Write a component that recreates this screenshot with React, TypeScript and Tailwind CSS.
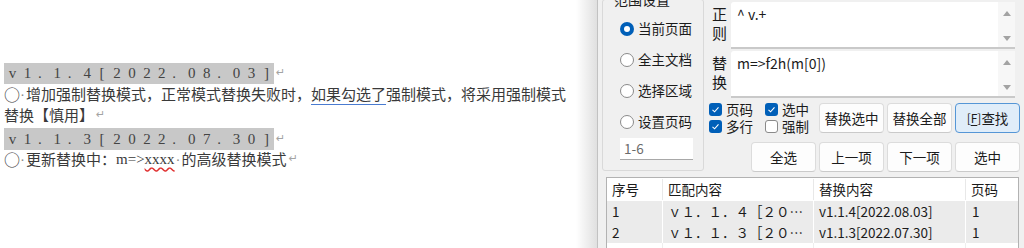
import type { ReactNode } from "react";

const SANS = "font-['Noto_Sans_CJK_SC','Noto_Sans',sans-serif]";

// one full-width cell per character, Times-like glyphs like the Word document
function WideText({ text }: { text: string }) {
  return (
    <>
      {Array.from(text).map((c, i) => (
        <span
          key={i}
          className={`inline-block w-[14.95px] font-['Liberation_Serif',serif] ${c === "." ? "pl-[3px] text-left" : "text-center"}`}
        >
          {c}
        </span>
      ))}
    </>
  );
}

function Mark() {
  return <span className="ml-[2px] font-['DejaVu_Sans',sans-serif] text-[11px] text-[#a3a3a3]">↵</span>;
}

function Dot() {
  return <span className="mx-[1px] font-['Liberation_Sans',sans-serif] text-[#8a8a8a]">·</span>;
}

function Bullet() {
  return <span className="inline-block w-[15px] text-center text-[16px]">○</span>;
}

function Radio({ checked, label }: { checked?: boolean; label: string }) {
  return (
    <div className="flex h-[31px] items-center gap-[4px]">
      {checked ? (
        <span className="flex size-[14px] items-center justify-center rounded-full bg-[#005fb8]">
          <span className="size-[6px] rounded-full bg-white" />
        </span>
      ) : (
        <span className="size-[14px] rounded-full border border-[#8a8a8a] bg-white" />
      )}
      <span>{label}</span>
    </div>
  );
}

function Check({ checked, label }: { checked?: boolean; label: string }) {
  return (
    <div className="flex h-[17px] items-center gap-[4px] leading-[17px]">
      {checked ? (
        <span className="flex size-[13px] items-center justify-center rounded-[3px] bg-[#005fb8]">
          <svg width="9" height="9" viewBox="0 0 9 9" fill="none">
            <path d="M1.5 4.8 L3.6 6.8 L7.5 2.4" stroke="white" strokeWidth="1.1" />
          </svg>
        </span>
      ) : (
        <span className="size-[13px] rounded-[3px] border border-[#8a8a8a] bg-white" />
      )}
      <span>{label}</span>
    </div>
  );
}

function Btn({ children, active }: { children: ReactNode; active?: boolean }) {
  return (
    <button
      className={
        active
          ? "flex h-[30px] w-[65px] items-center justify-center rounded-[4px] border border-[#5596d6] bg-[#e0edf9]"
          : "flex h-[30px] w-[65px] items-center justify-center rounded-[4px] border border-[#dcdcdc] border-b-[#cacaca] bg-[#fdfdfd]"
      }
    >
      {children}
    </button>
  );
}

function TextBox({ value }: { value: string }) {
  return (
    <div className="flex h-[47px] w-[284px] rounded-t-[3px] border-b-2 border-[#c9c9c9] bg-white">
      <div className="flex-1 pl-[6px] pt-[3px] text-[14px] leading-[18px] text-[#1b1b1b]">{value}</div>
      <div className="flex w-[17px] flex-col items-center justify-between bg-[#f7f7f7] pb-[6px] pt-[9px]">
        <svg width="8" height="5" viewBox="0 0 8 5">
          <path d="M4 0 L8 5 L0 5 Z" fill="#a3a3a3" />
        </svg>
        <svg width="8" height="5" viewBox="0 0 8 5">
          <path d="M0 0 L8 0 L4 5 Z" fill="#a3a3a3" />
        </svg>
      </div>
    </div>
  );
}

const ROWS = [
  { no: "1", match: "ｖ１．１．４［２０２２．０８．０３］", repl: "v1.1.4[2022.08.03]", page: "1" },
  { no: "2", match: "ｖ１．１．３［２０２２．０７．３０］", repl: "v1.1.3[2022.07.30]", page: "1" },
];

export default function App() {
  return (
    <div className="flex h-[248px] w-[1024px] overflow-hidden bg-white">
      {/* document */}
      <div className={`w-[576px] shrink-0 pl-[4px] pt-[63px] text-[15px] text-[#3a3a3a] ${SANS}`}>
        <div className="flex h-[21px] items-center whitespace-nowrap">
          <span className="flex h-[21px] items-center bg-[#c8c8c8] pl-[1px] text-[#444]">
            <WideText text="v1.1.4[2022.08.03]" />
          </span>
          <Mark />
        </div>
        <div className="flex h-[20px] items-center whitespace-nowrap">
          <Bullet />
          <Dot />增加强制替换模式，正常模式替换失败时，
          <span className="underline decoration-[#4a7bd0] underline-offset-[4px]">如果勾选了</span>
          强制模式，将采用强制模式
        </div>
        <div className="flex h-[22px] items-center whitespace-nowrap">
          替换【慎用】
          <Mark />
        </div>
        <div className="mt-[2px] flex h-[22px] items-center whitespace-nowrap">
          <span className="flex h-[22px] items-center bg-[#c8c8c8] pl-[1px] text-[#444]">
            <WideText text="v1.1.3[2022.07.30]" />
          </span>
          <Mark />
        </div>
        <div className="flex h-[18px] items-center whitespace-nowrap">
          <Bullet />
          <Dot />更新替换中：
          <span className="font-['Liberation_Serif',serif]">
            m=&gt;
            <span className="underline decoration-[#e03030] decoration-wavy underline-offset-[3px]">xxxx</span>
          </span>
          <Dot />
          的高级替换模式
          <Mark />
        </div>
      </div>
      <div className="w-[21px] shrink-0 bg-gradient-to-r from-white to-[#e0e0e0]" />

      {/* replace panel */}
      <div className={`flex flex-1 flex-col border-l border-[#c2c2c2] bg-[#f0f0f0] pl-[4px] pr-[4px] text-[13.5px] text-[#1b1b1b] ${SANS}`}>
        <div className="flex gap-[4px]">
          <fieldset className="mt-[-10px] h-[181px] w-[102px] shrink-0 rounded-[3px] border border-[#d9d9d9] pl-[17px]">
            <legend className="ml-[-8px] px-[2px] text-[14px] leading-[18px]">范围设置</legend>
            <div className="mt-[5px]">
              <Radio checked label="当前页面" />
              <Radio label="全主文档" />
              <Radio label="选择区域" />
              <Radio label="设置页码" />
            </div>
            <div className="mt-[1px] flex h-[22px] w-[73px] items-center border-b border-[#a8a8a8] bg-white pl-[4px] text-[#6b6b6b]">
              1-6
            </div>
          </fieldset>

          <div className="flex w-[312px] flex-col">
            <div className="mt-[2px] flex gap-[4px] pl-[4px]">
              <div className="w-[15px] pt-[2px] text-[15px] leading-[19px]">
                <div>正</div>
                <div>则</div>
              </div>
              <TextBox value="^ v.+" />
            </div>
            <div className="mt-[2px] flex gap-[4px] pl-[4px]">
              <div className="w-[15px] pt-[2px] text-[15px] leading-[19px]">
                <div>替</div>
                <div>换</div>
              </div>
              <TextBox value="m=>f2h(m[0])" />
            </div>

            <div className="mt-[3px] flex items-center">
              <div className="ml-[1px] flex">
                <div className="w-[56px]">
                  <Check checked label="页码" />
                  <Check checked label="多行" />
                </div>
                <div>
                  <Check checked label="选中" />
                  <Check label="强制" />
                </div>
              </div>
              <div className="ml-auto flex gap-[3px]">
                <Btn>替换选中</Btn>
                <Btn>替换全部</Btn>
                <Btn active>
                  <span className="text-[12px]">
                    [<span className="underline underline-offset-[2px]">F</span>]
                  </span>
                  查找
                </Btn>
              </div>
            </div>

            <div className="mt-[7px] flex justify-end gap-[3px]">
              <Btn>全选</Btn>
              <Btn>上一项</Btn>
              <Btn>下一项</Btn>
              <Btn>选中</Btn>
            </div>
          </div>
        </div>

        {/* results */}
        <div className="ml-[4px] mt-[5px] h-[90px] w-[413px] shrink-0 border border-[#b2b2b2] bg-white">
          <div className="grid h-[23px] grid-cols-[56px_151px_152px_52px] items-center">
            <div className="border-r border-[#e8e8e8] pl-[5px]">序号</div>
            <div className="border-r border-[#e8e8e8] pl-[5px]">匹配内容</div>
            <div className="border-r border-[#e8e8e8] pl-[5px]">替换内容</div>
            <div className="pl-[5px]">页码</div>
          </div>
          {ROWS.map((r) => (
            <div key={r.no} className="grid h-[21px] grid-cols-[56px_151px_152px_52px] items-center bg-[#ebebeb]">
              <div className="h-full border-r border-white pl-[5px] leading-[21px]">{r.no}</div>
              <div className="h-full truncate border-r border-white pl-[5px] pr-[8px] leading-[21px]">{r.match}</div>
              <div className="h-full truncate border-r border-white pl-[5px] leading-[21px]">{r.repl}</div>
              <div className="h-full pl-[6px] leading-[21px]">{r.page}</div>
            </div>
          ))}
          <div className="grid h-[30px] grid-cols-[56px_151px_152px_52px]">
            <div className="border-r border-[#eeeeee]" />
            <div className="border-r border-[#eeeeee]" />
            <div className="border-r border-[#eeeeee]" />
            <div />
          </div>
        </div>
      </div>
    </div>
  );
}
